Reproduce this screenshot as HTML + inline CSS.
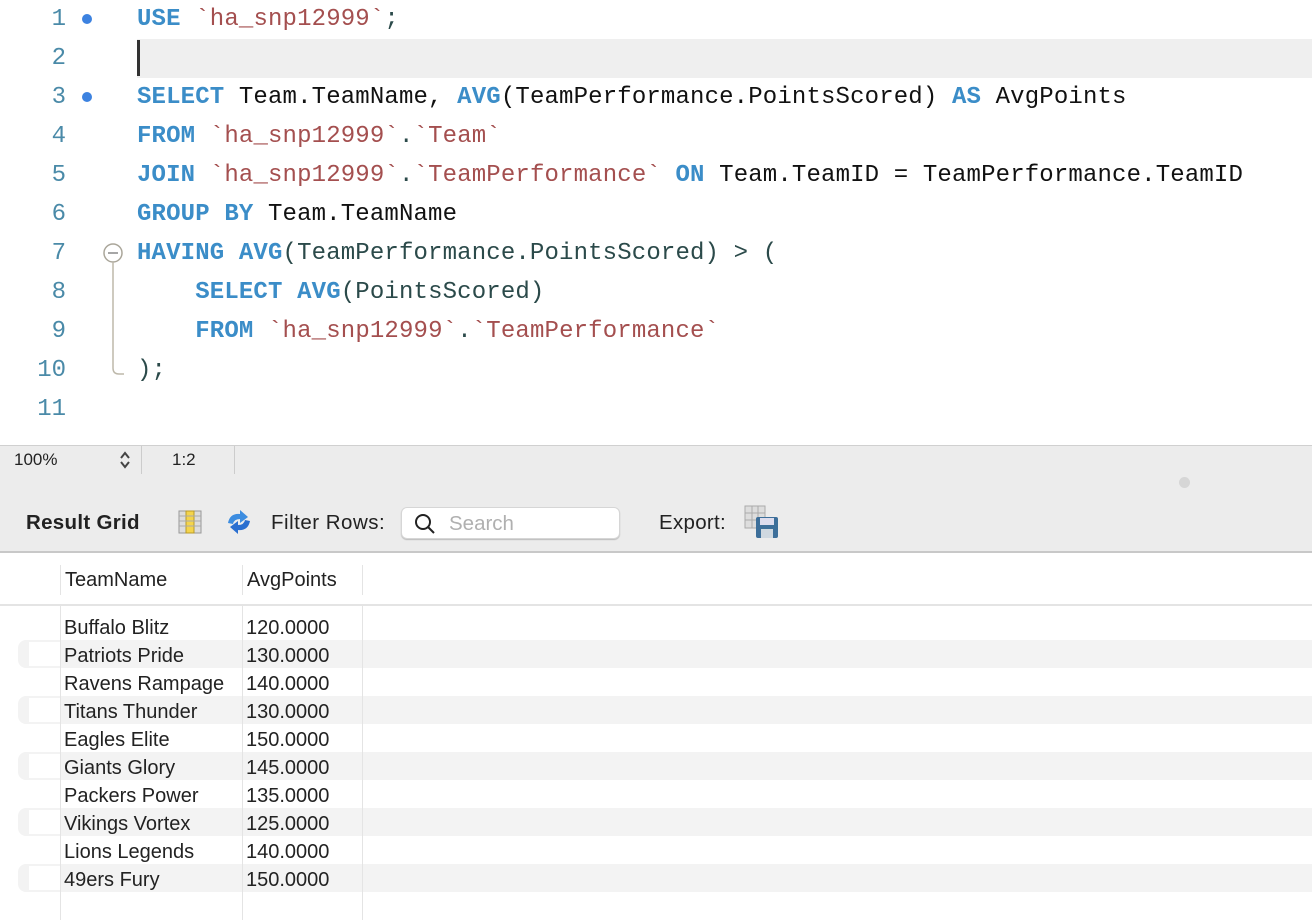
<!DOCTYPE html>
<html><head><meta charset="utf-8"><style>
*{margin:0;padding:0;box-sizing:border-box}
body{width:1312px;height:920px;overflow:hidden;background:#fff;font-family:"Liberation Sans",sans-serif;position:relative}
.ed{position:absolute;left:0;top:0;width:1312px;height:445px;background:#fff}
.ln{position:absolute;left:0;width:66px;text-align:right;font:24px "Liberation Mono",monospace;color:#4a8aa8;height:39px;line-height:40px}
.code{position:absolute;left:137px;font:24px "Liberation Mono",monospace;letter-spacing:0.15px;white-space:pre;height:39px;line-height:40px;color:#111}
.k{color:#3b8dc8;font-weight:bold}
.s{color:#a44f4f}
.p{color:#2b4a4a}
.dot{position:absolute;left:82px;width:10px;height:10px;border-radius:50%;background:#3c82e0}
.sb{position:absolute;left:0;top:445px;width:1312px;height:30px;background:#ececec;border-top:1px solid #d0d0d0;font-size:17px;color:#222}
.tb{position:absolute;left:0;top:475px;width:1312px;height:78px;background:#ececec;border-bottom:2px solid #c8c8c8}
.grid{position:absolute;left:0;top:553px;width:1312px;height:367px;background:#fff}
.row{position:absolute;left:0;width:1312px;height:28px;font-size:20px;color:#222;line-height:28px}
.alt{background:#f3f3f3}
.vl{position:absolute;top:0;width:1px;height:367px;background:#e4e4e4}
</style></head><body>
<div class="ed">
<div style="position:absolute;left:137px;top:39px;width:1175px;height:39px;background:#efefef"></div>
<div style="position:absolute;left:137px;top:40px;width:3px;height:36px;background:#333"></div>
<div class="ln" style="top:0">1</div><div class="dot" style="top:14px"></div>
<div class="ln" style="top:39px">2</div>
<div class="ln" style="top:78px">3</div><div class="dot" style="top:92px"></div>
<div class="ln" style="top:117px">4</div>
<div class="ln" style="top:156px">5</div>
<div class="ln" style="top:195px">6</div>
<div class="ln" style="top:234px">7</div>
<div class="ln" style="top:273px">8</div>
<div class="ln" style="top:312px">9</div>
<div class="ln" style="top:351px">10</div>
<div class="ln" style="top:390px">11</div>
<svg style="position:absolute;left:100px;top:240px" width="30" height="140"><circle cx="13" cy="13" r="9" fill="#fff" stroke="#aaa69a" stroke-width="1.5"/><line x1="8" y1="13" x2="18" y2="13" stroke="#888" stroke-width="1.5"/><path d="M13 22 V128 Q13 134 19 134 H24" fill="none" stroke="#bdb8aa" stroke-width="1.5"/></svg>
<div class="code" style="top:0"><span class="k">USE</span> <span class="s">`ha_snp12999`</span><span class="p">;</span></div>
<div class="code" style="top:78px"><span class="k">SELECT</span> Team.TeamName, <span class="k">AVG</span>(TeamPerformance.PointsScored) <span class="k">AS</span> AvgPoints</div>
<div class="code" style="top:117px"><span class="k">FROM</span> <span class="s">`ha_snp12999`</span><span class="p">.</span><span class="s">`Team`</span></div>
<div class="code" style="top:156px"><span class="k">JOIN</span> <span class="s">`ha_snp12999`</span><span class="p">.</span><span class="s">`TeamPerformance`</span> <span class="k">ON</span> Team.TeamID = TeamPerformance.TeamID</div>
<div class="code" style="top:195px"><span class="k">GROUP BY</span> Team.TeamName</div>
<div class="code" style="top:234px"><span class="k">HAVING AVG</span><span class="p">(TeamPerformance.PointsScored) &gt; (</span></div>
<div class="code" style="top:273px">    <span class="k">SELECT AVG</span><span class="p">(PointsScored)</span></div>
<div class="code" style="top:312px">    <span class="k">FROM</span> <span class="s">`ha_snp12999`</span><span class="p">.</span><span class="s">`TeamPerformance`</span></div>
<div class="code" style="top:351px"><span class="p">);</span></div>
</div>
<div class="sb">
<span style="position:absolute;left:14px;top:4px">100%</span>
<svg style="position:absolute;left:118px;top:4px" width="14" height="20"><path d="M3 8 L7 3 L11 8 M3 12 L7 17 L11 12" fill="none" stroke="#444" stroke-width="2"/></svg>
<div style="position:absolute;left:141px;top:0;width:1px;height:28px;background:#ccc"></div>
<span style="position:absolute;left:172px;top:4px">1:2</span>
<div style="position:absolute;left:234px;top:0;width:1px;height:28px;background:#ccc"></div>
</div>
<div class="tb">
<div style="position:absolute;left:1179px;top:2px;width:11px;height:11px;border-radius:50%;background:#d6d6d6"></div>
<span style="position:absolute;left:26px;top:36px;font-size:20.5px;font-weight:bold;color:#222;letter-spacing:0.3px">Result Grid</span>
<svg style="position:absolute;left:178px;top:35px" width="24" height="24"><rect x="1" y="1" width="22" height="22" fill="#ddd" stroke="#999"/><rect x="8" y="1" width="8" height="22" fill="#f4d44c" stroke="#b89a2a"/><path d="M1 6H23M1 11H23M1 16H23" stroke="#aaa"/></svg>
<svg style="position:absolute;left:224px;top:34px" width="30" height="26"><path d="M4 14 Q6 4 16 5 L16 1 L24 8 L16 14 L16 10 Q10 10 9 15Z" fill="#3d8de0"/><path d="M26 12 Q24 22 14 21 L14 25 L6 18 L14 12 L14 16 Q20 16 21 11Z" fill="#2a6fd0"/></svg>
<span style="position:absolute;left:271px;top:36px;font-size:20.5px;color:#222;letter-spacing:0.5px">Filter Rows:</span>
<div style="position:absolute;left:401px;top:32px;width:219px;height:32px;background:#fff;border-radius:6px;border:1px solid #d6d6d6;box-shadow:0 1px 1px #bbb"></div>
<svg style="position:absolute;left:414px;top:38px" width="22" height="22"><circle cx="9" cy="9" r="7" fill="none" stroke="#222" stroke-width="2"/><line x1="14" y1="14" x2="20" y2="20" stroke="#222" stroke-width="2"/></svg>
<span style="position:absolute;left:449px;top:37px;font-size:20.5px;color:#b0b0b0">Search</span>
<span style="position:absolute;left:659px;top:36px;font-size:20.5px;color:#222;letter-spacing:0.3px">Export:</span>
<svg style="position:absolute;left:744px;top:30px" width="36" height="34"><rect x="1" y="1" width="20" height="22" fill="#ddd" stroke="#aaa"/><path d="M1 8H21M1 15H21M8 1V23M14 1V23" stroke="#aaa"/><rect x="12" y="12" width="22" height="21" rx="2" fill="#3d6f9a"/><rect x="16" y="13" width="14" height="7" fill="#dde"/><rect x="17" y="24" width="12" height="9" fill="#cfd8e0"/></svg>
</div>
<div class="grid">
<div style="position:absolute;left:0;top:51px;width:1312px;height:2px;background:#e4e4e4"></div>
<div class="row alt" style="left:18px;top:87px;border-radius:8px 0 0 8px"></div>
<div class="row alt" style="left:18px;top:143px;border-radius:8px 0 0 8px"></div>
<div class="row alt" style="left:18px;top:199px;border-radius:8px 0 0 8px"></div>
<div class="row alt" style="left:18px;top:255px;border-radius:8px 0 0 8px"></div>
<div class="row alt" style="left:18px;top:311px;border-radius:8px 0 0 8px"></div>
<div style="position:absolute;left:29px;top:87px;width:31px;height:280px">
<div style="position:absolute;top:2px;width:31px;height:24px;background:#fff"></div>
<div style="position:absolute;top:58px;width:31px;height:24px;background:#fff"></div>
<div style="position:absolute;top:114px;width:31px;height:24px;background:#fff"></div>
<div style="position:absolute;top:170px;width:31px;height:24px;background:#fff"></div>
<div style="position:absolute;top:226px;width:31px;height:24px;background:#fff"></div>
</div>
<div class="vl" style="left:60px"></div>
<div class="vl" style="left:242px"></div>
<div class="vl" style="left:362px"></div>
<div style="position:absolute;left:0;top:0;width:1312px;height:51px;background:#fff"></div>
<div style="position:absolute;left:60px;top:12px;width:1px;height:30px;background:#e4e4e4"></div>
<div style="position:absolute;left:242px;top:12px;width:1px;height:30px;background:#e4e4e4"></div>
<div style="position:absolute;left:362px;top:12px;width:1px;height:30px;background:#e4e4e4"></div>
<span style="position:absolute;left:65px;top:16px;font-size:20px;color:#222">TeamName</span>
<span style="position:absolute;left:247px;top:16px;font-size:20px;color:#222">AvgPoints</span>
<div style="position:absolute;left:64px;top:61px;font-size:20px;color:#222;line-height:28px">Buffalo Blitz<br>Patriots Pride<br>Ravens Rampage<br>Titans Thunder<br>Eagles Elite<br>Giants Glory<br>Packers Power<br>Vikings Vortex<br>Lions Legends<br>49ers Fury</div>
<div style="position:absolute;left:246px;top:61px;font-size:20px;color:#222;line-height:28px">120.0000<br>130.0000<br>140.0000<br>130.0000<br>150.0000<br>145.0000<br>135.0000<br>125.0000<br>140.0000<br>150.0000</div>
</div>
</body></html>
